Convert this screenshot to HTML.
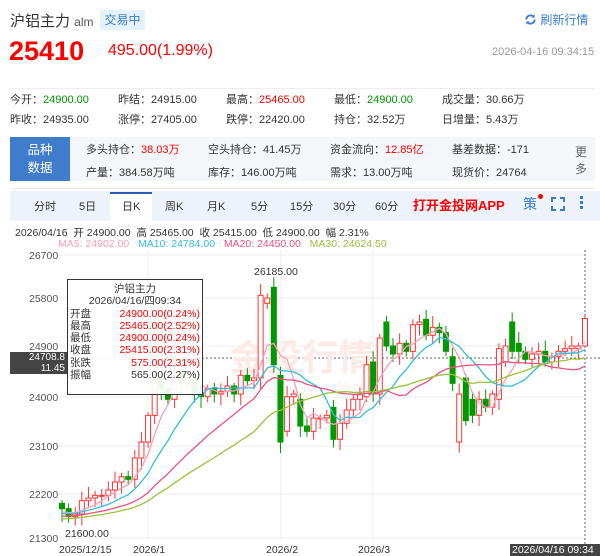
<!DOCTYPE html>
<html><head><meta charset="utf-8"><style>
*{margin:0;padding:0;box-sizing:border-box}
body{width:600px;height:556px;background:#fff;font-family:"Liberation Sans","Noto Sans CJK SC",sans-serif;position:relative;overflow:hidden;color:#333}
.a{position:absolute;white-space:nowrap}
.r{color:#f00}.g{color:#090}
.s{font-size:11px;color:#333}
</style></head><body>
<div class="a" style="left:10px;top:10px;font-size:15px;color:#333">沪铝主力 <span style="font-size:12px;color:#555">alm</span></div>
<div class="a" style="left:100px;top:10px;width:45px;height:20px;background:#e5f1fb;color:#3a7bd5;font-size:12px;line-height:20px;text-align:center">交易中</div>
<div class="a" style="left:524px;top:11px;font-size:12px;color:#3a7bd5"><svg width="13" height="13" viewBox="0 0 14 14" style="vertical-align:-2px"><path d="M2.5 7a4.5 4.5 0 0 1 8-2.8M11.5 7a4.5 4.5 0 0 1-8 2.8" stroke="#3a7bd5" stroke-width="2" fill="none"/><path d="M11.5 1.5v3.5H8z M2.5 12.5V9H6z" fill="#3a7bd5"/></svg> 刷新行情</div>
<div class="a" style="left:9px;top:36px;font-size:27px;font-weight:bold;color:#f00">25410</div>
<div class="a" style="left:108px;top:42px;font-size:16px;color:#f00">495.00(1.99%)</div>
<div class="a" style="left:492px;top:46px;font-size:11px;color:#999">2026-04-16 09:34:15</div>
<div class="a" style="left:10px;top:88px;width:585px;border-top:1px solid #eee"></div>
<div class="a s" style="left:10px;top:91px">今开：<span class="g">24900.00</span></div>
<div class="a s" style="left:118px;top:91px">昨结：24915.00</div>
<div class="a s" style="left:226px;top:91px">最高：<span class="r">25465.00</span></div>
<div class="a s" style="left:334px;top:91px">最低：<span class="g">24900.00</span></div>
<div class="a s" style="left:442px;top:91px">成交量：30.66万</div>
<div class="a s" style="left:10px;top:111px">昨收：24935.00</div>
<div class="a s" style="left:118px;top:111px">涨停：27405.00</div>
<div class="a s" style="left:226px;top:111px">跌停：22420.00</div>
<div class="a s" style="left:334px;top:111px">持仓：32.52万</div>
<div class="a s" style="left:442px;top:111px">日增量：5.43万</div>
<div class="a" style="left:10px;top:137px;width:585px;height:44px;background:#f4f6fa"></div>
<div class="a" style="left:10px;top:137px;width:60px;height:44px;background:#3f7ccc;color:#fff;font-size:12.5px;text-align:center;line-height:18px;padding-top:4px;white-space:normal">品种<br>数据</div>
<div class="a s" style="left:86px;top:141px">多头持仓：<span class="r">38.03万</span></div>
<div class="a s" style="left:208px;top:141px">空头持仓：41.45万</div>
<div class="a s" style="left:330px;top:141px">资金流向：<span class="r">12.85亿</span></div>
<div class="a s" style="left:452px;top:141px">基差数据：-171</div>
<div class="a s" style="left:86px;top:164px">产量：384.58万吨</div>
<div class="a s" style="left:208px;top:164px">库存：146.00万吨</div>
<div class="a s" style="left:330px;top:164px">需求：13.00万吨</div>
<div class="a s" style="left:452px;top:164px">现货价：24764</div>
<div class="a" style="left:575px;top:144px;font-size:12px;color:#666;line-height:17px;white-space:normal;width:14px">更多</div>
<div class="a" style="left:10px;top:188px;width:585px;border-top:1px solid #eee"></div>
<div class="a" style="left:10px;top:191px;width:590px;height:30px;background:#eef3fb"></div>
<div class="a" style="left:110px;top:192px;width:42px;height:29px;background:#fff;border-top:2px solid #2a5db0"></div>
<div class="a" style="top:198px;left:0;font-size:11px;color:#333">
<span class="a" style="left:34px">分时</span><span class="a" style="left:79px">5日</span><span class="a" style="left:122px">日K</span><span class="a" style="left:165px">周K</span><span class="a" style="left:207px">月K</span><span class="a" style="left:251px">5分</span><span class="a" style="left:290px">15分</span><span class="a" style="left:333px">30分</span><span class="a" style="left:375px">60分</span></div>
<div class="a" style="left:413px;top:195px;font-size:13px;font-weight:bold;color:#f00">打开金投网APP</div>
<div class="a" style="left:523px;top:194px;font-size:14px;color:#3a7bd5">策</div>
<div class="a" style="left:538px;top:194px;width:5px;height:5px;border-radius:50%;background:#f00"></div>
<svg class="a" style="left:551px;top:197px" width="14" height="14"><path d="M1 5V1h4M9 1h4v4M13 9v4H9M5 13H1V9" stroke="#3a7bd5" stroke-width="2" fill="none"/></svg>
<div class="a" style="left:580px;top:196px;width:3px;height:3px;background:#3a7bd5;box-shadow:0 5px 0 #3a7bd5,0 10px 0 #3a7bd5"></div>
<div class="a" style="left:15px;top:225px;font-size:10.5px;color:#333">2026/04/16 &nbsp;开 24900.00 &nbsp;高 25465.00 &nbsp;收 25415.00 &nbsp;低 24900.00 &nbsp;幅 2.31%</div>
<div class="a" style="left:58px;top:238px;font-size:10.5px"><span style="color:#f9a0b8">MA5: 24902.00</span> &nbsp; <span style="color:#33bde0">MA10: 24784.00</span> &nbsp; <span style="color:#f0507f">MA20: 24450.00</span> &nbsp; <span style="color:#9ac23a">MA30: 24624.50</span></div>
<svg id="ch" class="a" style="left:0;top:0" width="600" height="556"></svg>
<div class="a" style="left:67px;top:279px;width:136px;height:116px;background:rgba(255,255,255,.92);border:1px solid #333;font-size:10.5px;line-height:12.3px;padding-top:3px">
<div style="text-align:center">沪铝主力</div><div style="text-align:center">2026/04/16/四09:34</div>
<div style="display:flex;justify-content:space-between;padding:0 2px"><span>开盘</span><span class="r">24900.00(0.24%)</span></div>
<div style="display:flex;justify-content:space-between;padding:0 2px"><span>最高</span><span class="r">25465.00(2.52%)</span></div>
<div style="display:flex;justify-content:space-between;padding:0 2px"><span>最低</span><span class="r">24900.00(0.24%)</span></div>
<div style="display:flex;justify-content:space-between;padding:0 2px"><span>收盘</span><span class="r">25415.00(2.31%)</span></div>
<div style="display:flex;justify-content:space-between;padding:0 2px"><span>张跌</span><span class="r">575.00(2.31%)</span></div>
<div style="display:flex;justify-content:space-between;padding:0 2px"><span>振幅</span><span>565.00(2.27%)</span></div></div>
<div class="a" style="left:10px;top:352px;width:57px;height:22px;background:#444;color:#fff;font-size:10px;text-align:right;line-height:10.5px;padding:1px 2px 0 0">24708.8<br>11.45</div>
<div class="a" style="left:510px;top:544px;width:90px;height:12px;background:#444;color:#fff;font-size:10.5px;line-height:12px;padding-left:2px">2026/04/16 09:34</div>
<script>
var s=document.getElementById('ch'),h='';
function Y(p){return 346-(p-24900)*48/900}
var lab=[[26700,255],[25800,298],[24900,346],[24000,397],[23100,446],[22200,494],[21300,538]];
lab.forEach(function(l){h+='<line x1="58" x2="585" y1="'+l[1]+'" y2="'+l[1]+'" stroke="#eee"/><text x="29" y="'+(l[1]+4)+'" font-size="10.5" fill="#555">'+l[0]+'</text>'});
[148,281,373].forEach(function(x){h+='<line x1="'+x+'" x2="'+x+'" y1="250" y2="540" stroke="#eee"/>'});
h+='<line x1="585" x2="585" y1="250" y2="544" stroke="#666" stroke-dasharray="2,2"/><line x1="58" x2="600" y1="358" y2="358" stroke="#666" stroke-dasharray="2,2"/>';
h+='<text x="230" y="370" font-size="36" fill="#fbeae6" font-weight="bold">金投行情</text><text x="268" y="392" font-size="14" fill="#f2f2f2">quote.cngold.org</text>';
var d=[[21950,21850],[0,21700],[0,21750],[0,22000],[0,22050],[0,22100],[0,22100],[0,22200],[0,22350],[0,22450],[0,22400],[0,22800],[0,23100],[0,23600],[0,24300],[0,24100],[0,23900],[0,24400],[0,24200],[0,24300],[0,24000],[0,23950],[0,24100],[0,24000],[0,24050],[0,24150],[0,24000],[0,24350],[0,24250],[0,24300],
[24300,25850],[25700,25800],[26000,24550],[24350,23100],[23300,23950],[0,24000],[23900,23400],[0,23300],[0,23550],[0,23550],[0,23600],[23750,23150],[0,23450],[0,23700],[0,23900],[0,24000],[23950,24550],[24600,24000],[24000,25050],[25350,24900],[0,24750],[0,24950],[0,24800],[0,25300],[0,25350],[25400,25100],[0,25250],[0,25150],[0,24800],[24700,24200],[23100,24000],[24300,23500],[23900,23600],[0,23900],[0,23750],[0,24000],[23900,24850],[24600,24900],[25350,24800],[24950,24800],[0,24650],[0,24750],[0,24800],[24800,24600],[0,24700],[0,24800],[0,24850],[0,24900],[24850,24900],[24900,25415]];
var n=d.length,x0=62,x1=585,dx=(x1-x0)/(n-1),c=[];
for(var i=0;i<n;i++){var op=d[i][0]||(i?d[i-1][1]:21900),cl=d[i][1];c.push(cl);
var hi=Math.max(op,cl)+60+(i*37%160),lo=Math.min(op,cl)-60-(i*53%160);
if(i==32)hi=26185;if(i==0)lo=21600;if(i==n-1){hi=25465;lo=24900}
var x=x0+i*dx,up=cl>=op,col=up?'#f33':'#090';
h+='<line x1="'+x+'" x2="'+x+'" y1="'+Y(hi)+'" y2="'+Y(lo)+'" stroke="'+col+'"/>';
var yt=Y(Math.max(op,cl)),hh=Math.max(1,Y(Math.min(op,cl))-yt);
h+='<rect x="'+(x-2.5)+'" y="'+yt+'" width="5" height="'+hh+'" fill="'+(up?'#fff':'#090')+'" stroke="'+col+'"/>'}
function ma(k,col){var p='';for(var i=0;i<n;i++){var a=0,m=0;for(var j=i-k+1;j<=i;j++){a+=(j<0?21800+j*10:c[j]);m++}p+=(i?'L':'M')+(x0+i*dx).toFixed(1)+' '+Y(a/m).toFixed(1)}h+='<path d="'+p+'" stroke="'+col+'" fill="none" stroke-width="1.3"/>'}
ma(5,'#f9a0b8');ma(10,'#33bde0');ma(20,'#f0507f');ma(30,'#9ac23a');
h+='<text x="254" y="275" font-size="10.5" fill="#333">26185.00</text><text x="65" y="537" font-size="10.5" fill="#333">21600.00</text>';
h+='<text x="59" y="553" font-size="10.5" fill="#333">2025/12/15</text><text x="133" y="553" font-size="10.5" fill="#333">2026/1</text><text x="266" y="553" font-size="10.5" fill="#333">2026/2</text><text x="358" y="553" font-size="10.5" fill="#333">2026/3</text>';
s.innerHTML=h;
</script>
</body></html>
